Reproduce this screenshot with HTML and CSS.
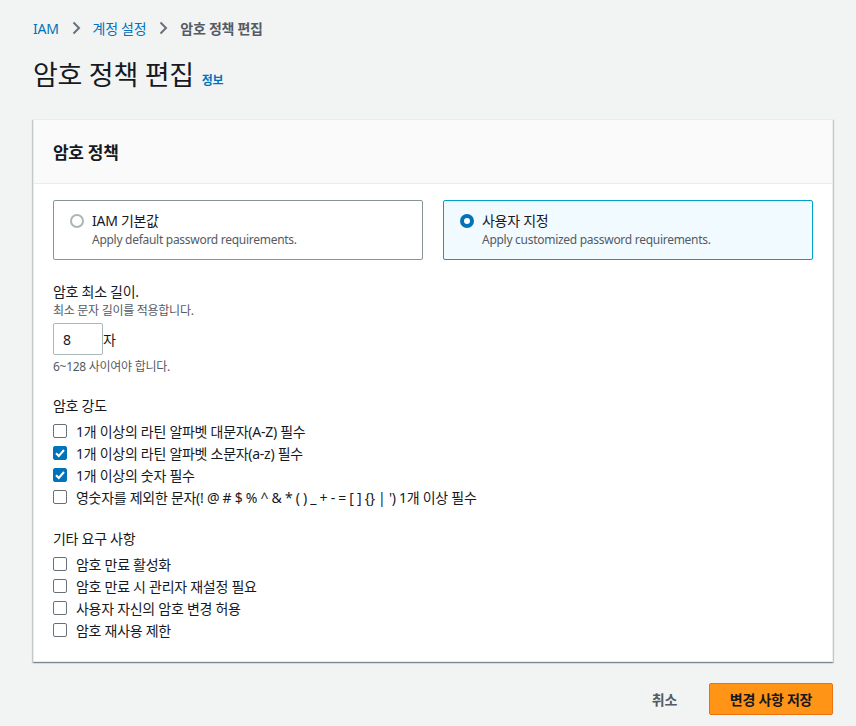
FILE: index.html
```html
<!DOCTYPE html>
<html lang="ko">
<head>
<meta charset="utf-8">
<link rel="stylesheet" href="styles.css">
</head>
<body>
<div class="page">
  <nav class="crumbs">
    <a class="link">IAM</a>
    <svg class="sep" width="16" height="16" viewBox="0 0 16 16"><path d="M5.5 2.5 L11 8 L5.5 13.5" fill="none" stroke="#687078" stroke-width="2"/></svg>
    <a class="link">계정 설정</a>
    <svg class="sep" width="16" height="16" viewBox="0 0 16 16"><path d="M5.5 2.5 L11 8 L5.5 13.5" fill="none" stroke="#687078" stroke-width="2"/></svg>
    <span class="current">암호 정책 편집</span>
  </nav>
  <header class="title-row">
    <h1>암호 정책 편집</h1>
    <a class="info">정보</a>
  </header>

  <section class="card">
    <div class="card-head"><h2>암호 정책</h2></div>
    <div class="card-body">
      <div class="tiles">
        <div class="tile">
          <span class="radio"></span>
          <div>
            <div class="tile-label">IAM 기본값</div>
            <div class="tile-desc">Apply default password requirements.</div>
          </div>
        </div>
        <div class="tile selected">
          <span class="radio on"></span>
          <div>
            <div class="tile-label">사용자 지정</div>
            <div class="tile-desc">Apply customized password requirements.</div>
          </div>
        </div>
      </div>

      <div class="field">
        <div class="label">암호 최소 길이.</div>
        <div class="hint">최소 문자 길이를 적용합니다.</div>
        <div class="input-row"><span class="input">8</span><span>자</span></div>
        <div class="hint">6~128 사이여야 합니다.</div>
      </div>

      <div class="group">
        <div class="label">암호 강도</div>
        <ul class="checks">
          <li><span class="box"></span>1개 이상의 라틴 알파벳 대문자(A-Z) 필수</li>
          <li><span class="box on"><svg width="14" height="14" viewBox="0 0 14 14"><path d="M3 7.2 L5.8 10 L11 4" fill="none" stroke="#fff" stroke-width="2"/></svg></span>1개 이상의 라틴 알파벳 소문자(a-z) 필수</li>
          <li><span class="box on"><svg width="14" height="14" viewBox="0 0 14 14"><path d="M3 7.2 L5.8 10 L11 4" fill="none" stroke="#fff" stroke-width="2"/></svg></span>1개 이상의 숫자 필수</li>
          <li><span class="box"></span>영숫자를 제외한 문자(! @ # $ % ^ &amp; * ( ) _ + - = [ ] {} | ') 1개 이상 필수</li>
        </ul>
      </div>

      <div class="group">
        <div class="label">기타 요구 사항</div>
        <ul class="checks">
          <li><span class="box"></span>암호 만료 활성화</li>
          <li><span class="box"></span>암호 만료 시 관리자 재설정 필요</li>
          <li><span class="box"></span>사용자 자신의 암호 변경 허용</li>
          <li><span class="box"></span>암호 재사용 제한</li>
        </ul>
      </div>
    </div>
  </section>

  <footer class="actions">
    <button class="btn-link">취소</button>
    <button class="btn-primary">변경 사항 저장</button>
  </footer>
</div>
</body>
</html>
```

FILE: styles.css
```css
* { box-sizing: border-box; }
html, body { margin: 0; padding: 0; }
body {
  background: #f2f3f3;
  font-family: "Noto Sans", "Noto Sans CJK KR", sans-serif;
  color: #16191f;
  font-size: 14px;
  letter-spacing: -0.02em;
  width: 856px;
  height: 726px;
  overflow: hidden;
}
.page { padding: 16px 23px 0 33px; }
.crumbs {
  display: flex;
  align-items: center;
  gap: 9px;
  height: 24px;
  font-size: 14px;
}
.link { color: #0073bb; }
.current { color: #545b64; font-weight: 600; }
.sep { display: block; }
.title-row {
  display: flex;
  align-items: baseline;
  gap: 8px;
  margin-top: 15px;
  height: 40px;
}
h1 {
  margin: 0;
  font-size: 27px;
  font-weight: 400;
  line-height: 40px;
}
.info { color: #0073bb; font-size: 12px; font-weight: 700; }

.card {
  margin-top: 24px;
  width: 800px;
  background: #fff;
  border: 1px solid #eaeded;
  box-shadow: 0 1px 1px 0 rgba(0,28,36,.3), 1px 1px 1px 0 rgba(0,28,36,.15), -1px 1px 1px 0 rgba(0,28,36,.15);
}
.card-head {
  background: #fafafa;
  border-bottom: 1px solid #eaeded;
  height: 64px;
  padding: 0 19px;
  display: flex;
  align-items: center;
}
h2 { margin: 0; font-size: 17px; font-weight: 700; }
.card-body { padding: 16px 19px 20px; }

.tiles { display: grid; grid-template-columns: 370px 370px; gap: 20px; }
.tile {
  height: 60px;
  border: 1px solid #879596;
  border-radius: 2px;
  padding: 10px 16px;
  display: flex;
  gap: 8px;
  align-items: flex-start;
}
.tile.selected { background: #f1faff; border-color: #00a1c9; }
.radio {
  width: 14px; height: 14px;
  margin-top: 3px;
  border: 2px solid #aab7b8;
  border-radius: 50%;
  flex: none;
}
.radio.on { border: 4px solid #0073bb; background: #fff; }
.tile-label { font-size: 14px; line-height: 20px; }
.tile-desc { font-size: 12px; line-height: 18px; color: #545b64; }

.field { margin-top: 21px; }
.label { font-size: 14px; line-height: 22px; }
.hint { font-size: 12px; line-height: 16px; color: #545b64; }
.input-row { display: flex; align-items: center; margin: 4px 0 4px; }
.input {
  width: 50px; height: 32px;
  border: 1px solid #aab7b8;
  border-radius: 2px;
  padding: 0 9px;
  display: flex; align-items: center;
  font-size: 14px;
}
.group { margin-top: 20px; }
.checks { list-style: none; margin: 3px 0 0; padding: 0; }
.checks li {
  height: 22px;
  display: flex;
  align-items: center;
  gap: 9px;
  font-size: 14px;
}
.box {
  width: 14px; height: 14px;
  border: 1px solid #687078;
  border-radius: 2px;
  flex: none;
  display: flex;
}
.box.on { background: #0073bb; border-color: #0073bb; }
.box svg { display: block; margin: -1px; }

.actions {
  display: flex;
  justify-content: flex-end;
  align-items: center;
  gap: 10px;
  margin-top: 21px;
  width: 800px;
}
button { font-family: inherit; font-size: 14px; font-weight: 700; cursor: pointer; letter-spacing: -0.02em; }
.btn-link {
  background: none; border: 0; color: #545b64;
  height: 32px; padding: 0 22px;
}
.btn-primary {
  background: #ff9416;
  border: 1px solid #ec7211;
  border-radius: 2px;
  color: #16191f;
  height: 32px;
  width: 124px;
}
```
